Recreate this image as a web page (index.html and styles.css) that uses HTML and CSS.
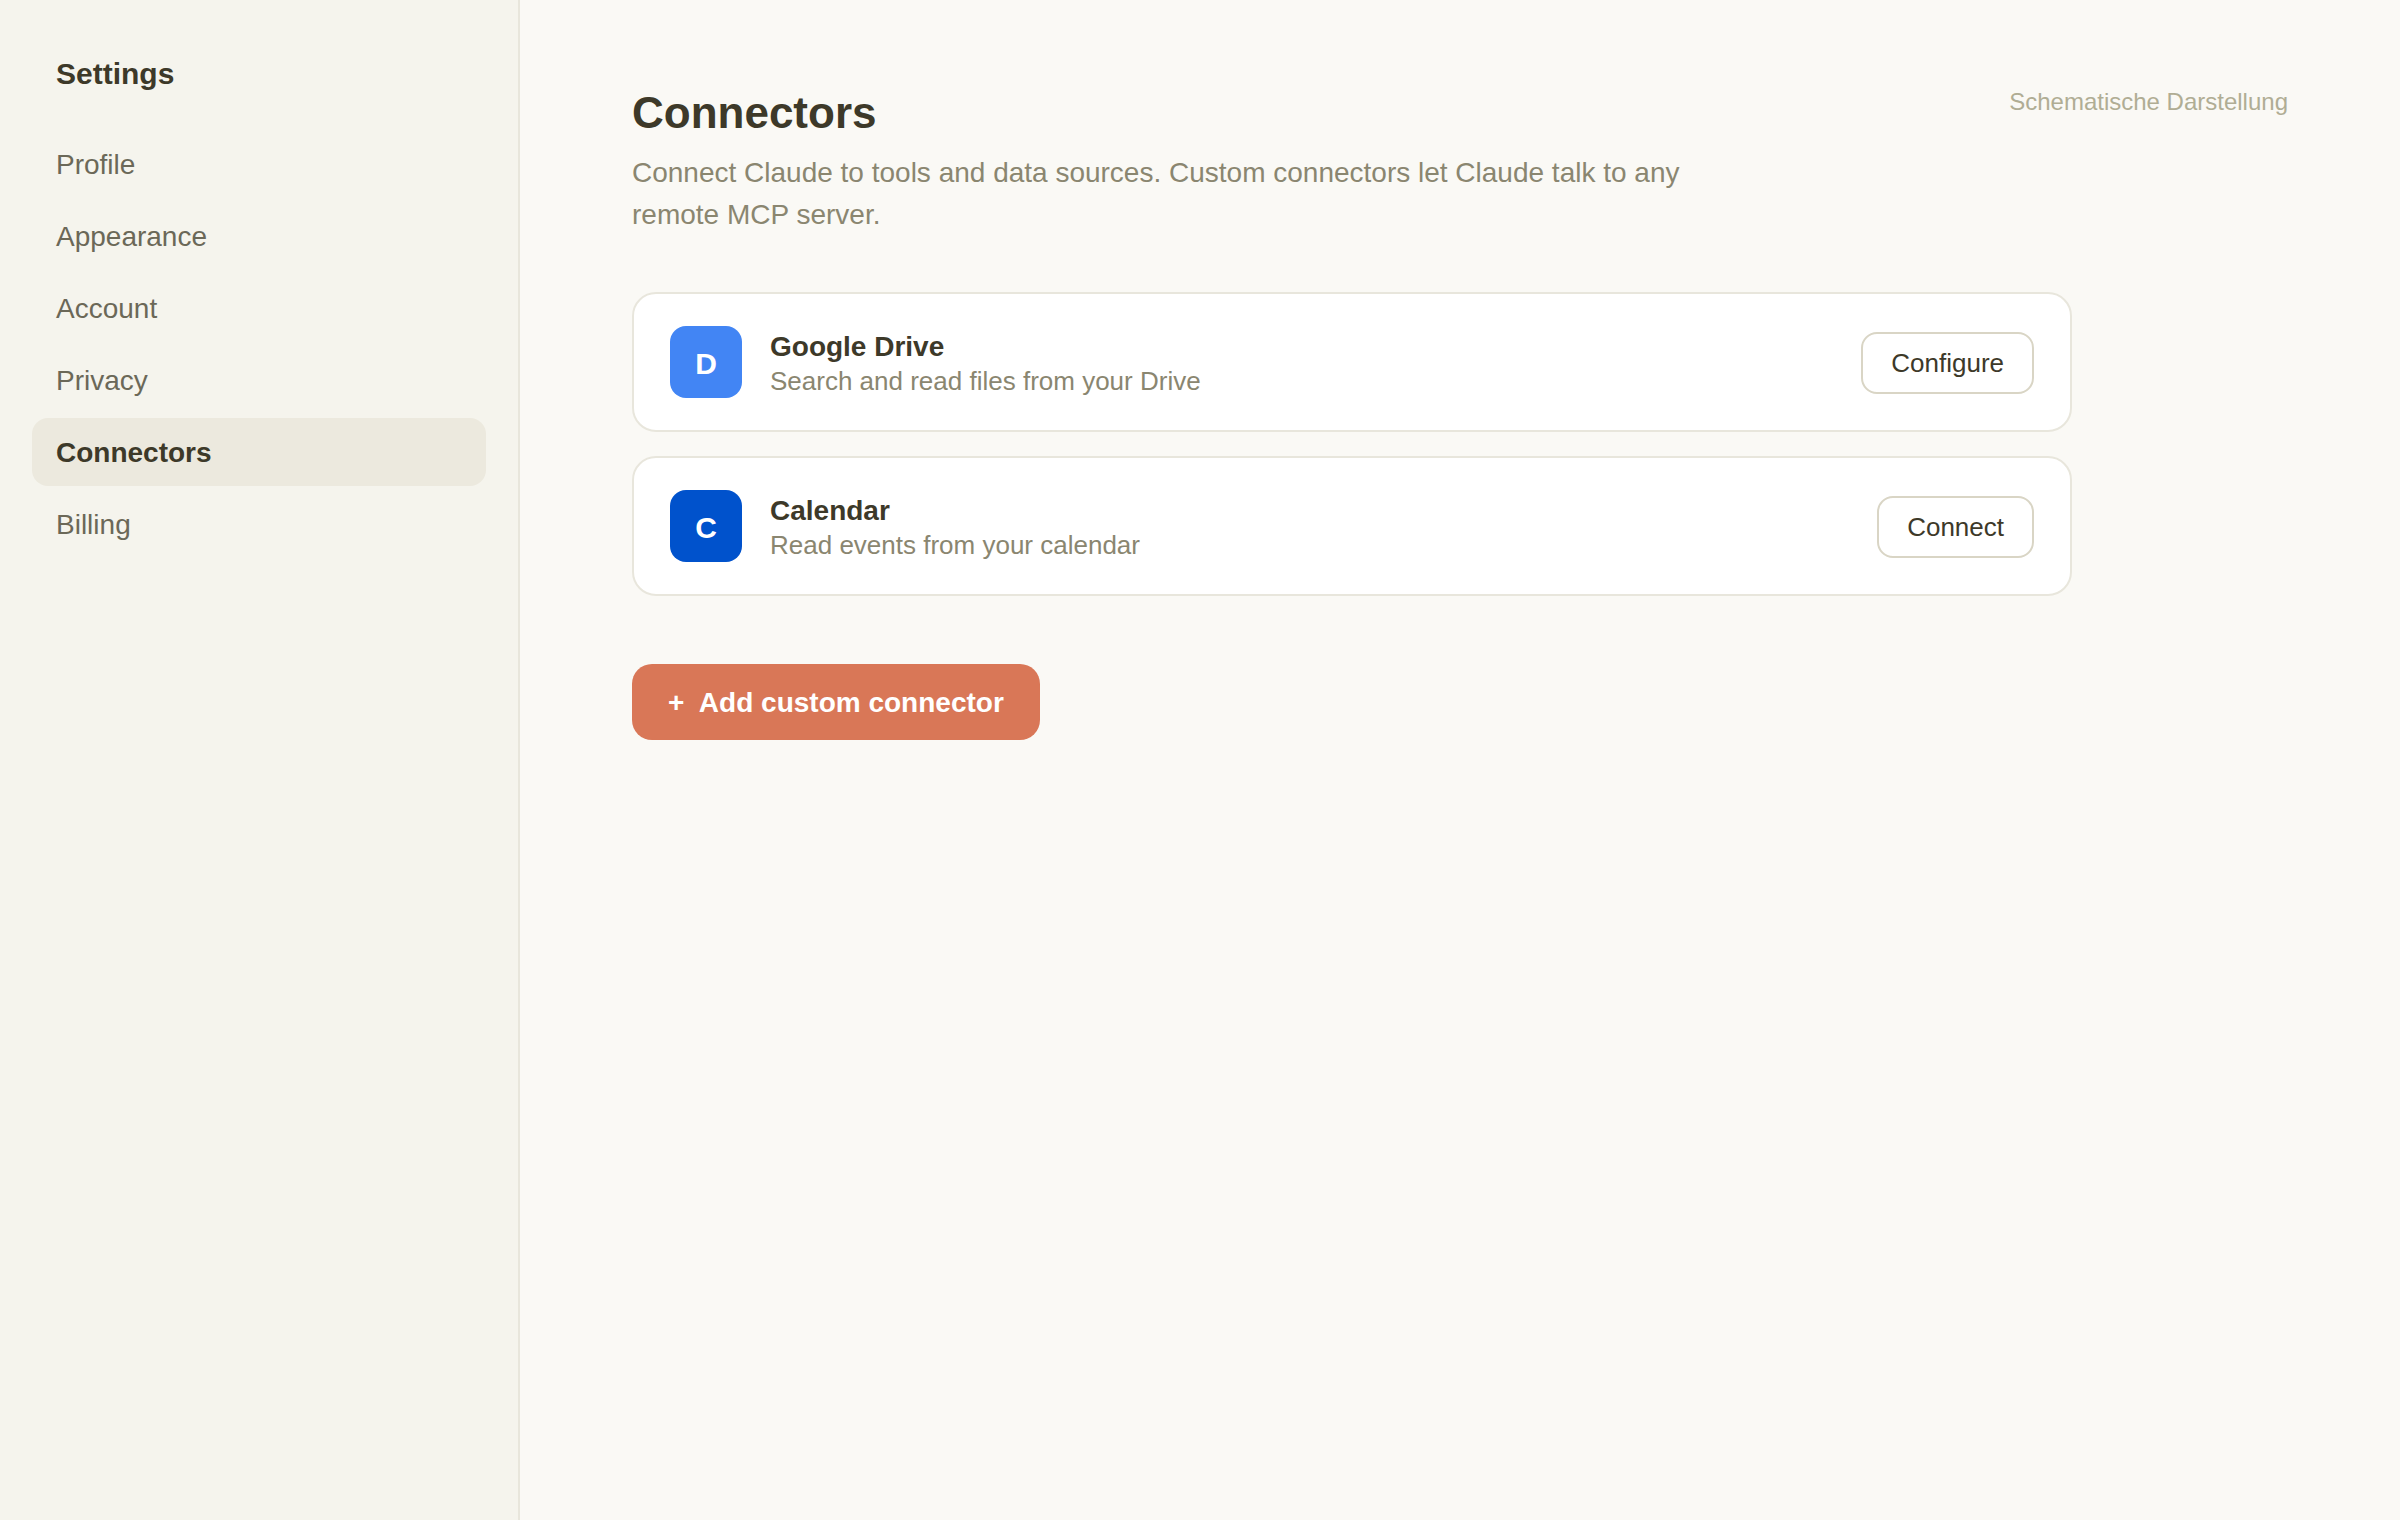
FILE: index.html
```html
<!DOCTYPE html>
<html lang="en">
<head>
  <meta charset="UTF-8">
  <meta name="viewport" content="width=device-width, initial-scale=1.0">
  <title>Settings - Connectors</title>
  <link rel="stylesheet" href="styles.css">
</head>
<body>
  <aside class="sidebar">
    <h2>Settings</h2>
    <nav>
      <a href="#profile">Profile</a>
      <a href="#appearance">Appearance</a>
      <a href="#account">Account</a>
      <a href="#privacy">Privacy</a>
      <a href="#connectors" class="active" aria-current="page">Connectors</a>
      <a href="#billing">Billing</a>
    </nav>
  </aside>

  <main class="main">
    <header class="header">
      <div class="intro">
        <h1>Connectors</h1>
        <p>Connect Claude to tools and data sources. Custom connectors let Claude talk to any remote MCP server.</p>
      </div>
      <span class="note" lang="de">Schematische Darstellung</span>
    </header>

    <div class="list">
      <div class="card">
        <div class="icon drive">D</div>
        <div class="info">
          <div class="name">Google Drive</div>
          <div class="desc">Search and read files from your Drive</div>
        </div>
        <button type="button" class="btn">Configure</button>
      </div>
      <div class="card">
        <div class="icon calendar">C</div>
        <div class="info">
          <div class="name">Calendar</div>
          <div class="desc">Read events from your calendar</div>
        </div>
        <button type="button" class="btn">Connect</button>
      </div>
    </div>

    <button type="button" class="btn-add">+&nbsp; Add custom connector</button>
  </main>
</body>
</html>
```
FILE: styles.css
```css
* { box-sizing: border-box; margin: 0; padding: 0; }

body {
  font-family: "Liberation Sans", Arial, sans-serif;
  font-size: 28px;
  line-height: 32px;
  background: #faf9f5;
  color: #3d3929;
  display: flex;
  min-height: 100vh;
}

/* Sidebar */
.sidebar {
  flex: 0 0 520px;
  background: #f5f4ed;
  border-right: 2px solid #e8e6dc;
  padding: 56px 32px;
}
.sidebar h2 {
  font-size: 30px;
  line-height: 36px;
  padding: 0 24px;
  margin-bottom: 38px;
}
.sidebar nav {
  display: flex;
  flex-direction: column;
  gap: 4px;
}
.sidebar a {
  padding: 19px 24px 17px;
  border-radius: 16px;
  color: #6b6858;
  text-decoration: none;
}
.sidebar a.active {
  background: #ece9de;
  color: #3d3929;
  font-weight: bold;
}

/* Content */
.main {
  flex: 1;
  padding: 88px 112px;
}
.header {
  display: flex;
  justify-content: space-between;
  align-items: flex-start;
  margin-bottom: 56px;
}
.intro {
  max-width: 1120px;
}
.intro h1 {
  font-size: 44px;
  line-height: 50px;
  margin-bottom: 14px;
}
.intro p {
  line-height: 42px;
  color: #8a8670;
}
.note {
  font-size: 24px;
  line-height: 28px;
  color: #b0ad94;
}

/* Connector cards */
.list {
  display: flex;
  flex-direction: column;
  gap: 24px;
  max-width: 1440px;
  margin-bottom: 68px;
}
.card {
  display: flex;
  align-items: center;
  gap: 28px;
  padding: 32px 36px;
  background: #fff;
  border: 2px solid #e8e6dc;
  border-radius: 24px;
}
.icon {
  display: flex;
  align-items: center;
  justify-content: center;
  width: 72px;
  height: 72px;
  padding-top: 3px;
  border-radius: 16px;
  color: #fff;
  font-size: 30px;
  font-weight: bold;
}
.drive { background: #4285f4; }
.calendar { background: #0052cc; }
.info {
  flex: 1;
  padding-top: 3px;
}
.name {
  font-weight: bold;
  margin-bottom: 3px;
}
.desc {
  font-size: 26px;
  line-height: 30px;
  color: #8a8670;
}

/* Buttons */
.btn {
  font: inherit;
  font-size: 26px;
  line-height: 30px;
  color: #3d3929;
  background: #fff;
  border: 2px solid #d9d5c5;
  border-radius: 16px;
  margin-top: 2px;
  padding: 14px 28px;
  cursor: pointer;
}
.btn-add {
  font: inherit;
  font-weight: bold;
  color: #fff;
  background: #d97757;
  border: none;
  border-radius: 20px;
  padding: 23px 36px 21px;
  cursor: pointer;
}
```
